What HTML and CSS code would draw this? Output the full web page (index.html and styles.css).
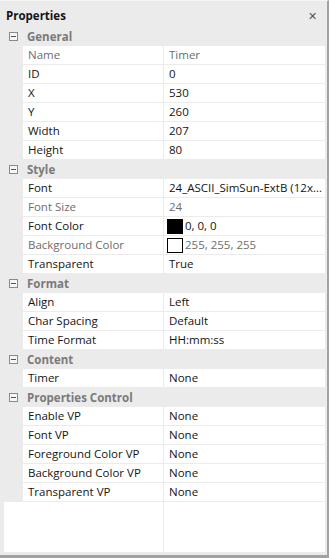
FILE: index.html
```html
<!DOCTYPE html>
<html lang="en">
<head>
    <meta charset="UTF-8">
    <meta name="viewport" content="width=device-width, initial-scale=1.0">
    <title>Properties</title>
    <link rel="stylesheet" href="styles.css">
</head>
<body>
    <div class="panel">
        <div class="panel-header">
            <div class="panel-title">Properties</div>
            <div class="panel-close">&#10005;</div>
        </div>
        <div class="grid">
            <div class="category"><span class="toggle"></span>General</div>
            <div class="row disabled"><div class="name">Name</div><div class="value">Timer</div></div>
            <div class="row"><div class="name">ID</div><div class="value">0</div></div>
            <div class="row"><div class="name">X</div><div class="value">530</div></div>
            <div class="row"><div class="name">Y</div><div class="value">260</div></div>
            <div class="row"><div class="name">Width</div><div class="value">207</div></div>
            <div class="row"><div class="name">Height</div><div class="value">80</div></div>

            <div class="category"><span class="toggle"></span>Style</div>
            <div class="row"><div class="name">Font</div><div class="value">24_ASCII_SimSun-ExtB (12x...</div></div>
            <div class="row disabled"><div class="name">Font Size</div><div class="value">24</div></div>
            <div class="row"><div class="name">Font Color</div><div class="value"><span class="swatch black"></span>0, 0, 0</div></div>
            <div class="row disabled"><div class="name">Background Color</div><div class="value"><span class="swatch white"></span>255, 255, 255</div></div>
            <div class="row"><div class="name">Transparent</div><div class="value">True</div></div>

            <div class="category"><span class="toggle"></span>Format</div>
            <div class="row"><div class="name">Align</div><div class="value">Left</div></div>
            <div class="row"><div class="name">Char Spacing</div><div class="value">Default</div></div>
            <div class="row"><div class="name">Time Format</div><div class="value">HH:mm:ss</div></div>

            <div class="category"><span class="toggle"></span>Content</div>
            <div class="row"><div class="name">Timer</div><div class="value">None</div></div>

            <div class="category"><span class="toggle"></span>Properties Control</div>
            <div class="row"><div class="name">Enable VP</div><div class="value">None</div></div>
            <div class="row"><div class="name">Font VP</div><div class="value">None</div></div>
            <div class="row"><div class="name">Foreground Color VP</div><div class="value">None</div></div>
            <div class="row"><div class="name">Background Color VP</div><div class="value">None</div></div>
            <div class="row"><div class="name">Transparent VP</div><div class="value">None</div></div>

            <div class="filler"><div class="name"></div><div class="value"></div></div>
        </div>
    </div>
</body>
</html>
```

FILE: styles.css
```css
body, html {
    margin: 0;
    padding: 0;
    height: 100%;
    font-family: "Open Sans", "Noto Sans", sans-serif;
    font-size: 11.5px;
    color: #141414;
    background-color: #ebebec;
}
.panel {
    height: 558px;
    box-sizing: border-box;
    display: flex;
    flex-direction: column;
    padding: 0 2px 3px 4px;
    border-right: 2px solid #a2a2a2;
    border-bottom: 3px solid #a2a2a2;
    border-top: 1px solid #f4f4f4;
    width: 329px;
}
.panel-header {
    height: 26px;
    display: flex;
    align-items: center;
    justify-content: space-between;
}
.panel-title {
    font-weight: bold;
    margin-left: 2px;
    margin-top: 2px;
}
.panel-close {
    font-size: 11px;
    color: #555;
    margin-right: 8px;
    margin-top: 2px;
}
.grid {
    flex: 1;
    display: flex;
    flex-direction: column;
    background-color: #ffffff;
}
.category {
    height: 18px;
    border-bottom: 1px solid #ebebec;
    background-color: #ebebec;
    display: flex;
    align-items: center;
    font-weight: bold;
    color: #7a7a7a;
}
.toggle {
    width: 7px;
    height: 7px;
    border: 1px solid #8a8a8a;
    margin: 0 9px 0 5px;
    position: relative;
    background-color: #f6f6f6;
}
.toggle::after {
    content: "";
    position: absolute;
    left: 1px;
    right: 1px;
    top: 3px;
    height: 1px;
    background-color: #555;
}
.row {
    height: 18px;
    display: flex;
    border-bottom: 1px solid #ebebec;
    border-left: 19px solid #ebebec;
    line-height: 18px;
}
.row.disabled {
    color: #6d6d6d;
}
.name {
    width: 141px;
    padding-left: 5px;
    box-sizing: border-box;
    border-right: 1px solid #ebebec;
    white-space: nowrap;
    overflow: hidden;
}
.value {
    flex: 1;
    padding-left: 5px;
    padding-right: 2px;
    white-space: nowrap;
    overflow: hidden;
    min-width: 0;
}
.filler {
    flex: 1;
    display: flex;
}
.filler .name {
    width: 160px;
}
.swatch {
    display: inline-block;
    box-sizing: border-box;
    width: 16px;
    height: 15px;
    border: 1px solid #000;
    margin-left: -2px;
    margin-right: 2px;
    vertical-align: -4px;
}
.swatch.black {
    background-color: #000;
}
.swatch.white {
    background-color: #fff;
}
```
